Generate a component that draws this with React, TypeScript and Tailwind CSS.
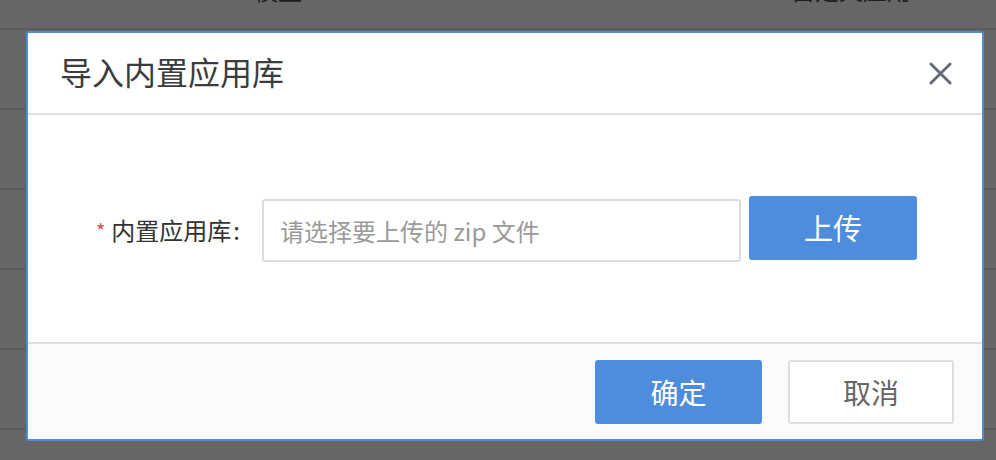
import React from 'react'

const rows = [0, 1, 2, 3, 4]

export default function App() {
  return (
    <div className="relative w-[996px] h-[460px] overflow-hidden bg-[#666666]" style={{ fontFamily: '"Noto Sans CJK SC", "Noto Sans", sans-serif' }}>
      {/* table behind the overlay */}
      <div className="flex flex-col">
        <div className="h-[30px] border-b-2 border-[#5c5c5c] relative overflow-hidden">
          <div className="flex text-[24px] leading-[30px] text-[#1e1e1e] -mt-[25px]">
            <span className="ml-[254px]">模型</span>
            <span className="ml-[489px]">自定义应用</span>
          </div>
        </div>
        {rows.map((r) => (
          <div key={r} className="h-[80px] border-b-2 border-[#5c5c5c]" />
        ))}
      </div>

      {/* dialog */}
      <div className="absolute left-[26px] top-[31px] w-[958px] h-[410px] bg-white border-2 border-[#4a8ddb] rounded-[3px] flex flex-col overflow-hidden">
        <div className="h-[82px] flex items-center justify-between pl-[32px] pr-[30px] border-b-2 border-[#e0e0e0]">
          <h2 className="text-[32px] text-[#3c3c3c] -mt-[4px]">导入内置应用库</h2>
          <button className="w-[23px] h-[23px] flex items-center justify-center text-[#646a73]">
            <svg width="23" height="23" viewBox="0 0 24 24" fill="none" stroke="currentColor" strokeWidth="3" strokeLinecap="round">
              <path d="M2 2 L22 22 M22 2 L2 22" />
            </svg>
          </button>
        </div>

        <div className="flex-1 flex items-center pl-[68px]">
          <div className="flex items-start">
            <div className="flex items-center h-[63px] mt-[3px] text-[24px] text-[#333333]">
              <span className="text-[#e5484d] text-[20px] mr-[6px] mt-[2px]">*</span>
              <span>内置应用库</span>
              <span className="ml-[2px]">:</span>
            </div>
            <input
              readOnly
              placeholder="请选择要上传的 zip 文件"
              className="ml-[22px] mt-[3px] w-[479px] h-[63px] border-2 border-[#dddddd] rounded-[3px] px-[16px] text-[24px] text-[#333] placeholder:text-[#9a9a9a] outline-none"
            />
            <button className="ml-[8px] w-[168px] h-[64px] rounded-[3px] bg-[#4e8ddb] text-white text-[29px]">上传</button>
          </div>
        </div>

        <div className="h-[97px] border-t-2 border-[#dddddd] bg-[#fbfbfb] flex items-start justify-end pt-[16px] pr-[28px] gap-[26px]">
          <button className="w-[167px] h-[64px] rounded-[3px] bg-[#4e8ddb] text-white text-[28px]">确定</button>
          <button className="w-[166px] h-[64px] rounded-[3px] bg-white border-2 border-[#dddddd] text-[#666666] text-[28px]">取消</button>
        </div>
      </div>
    </div>
  )
}
